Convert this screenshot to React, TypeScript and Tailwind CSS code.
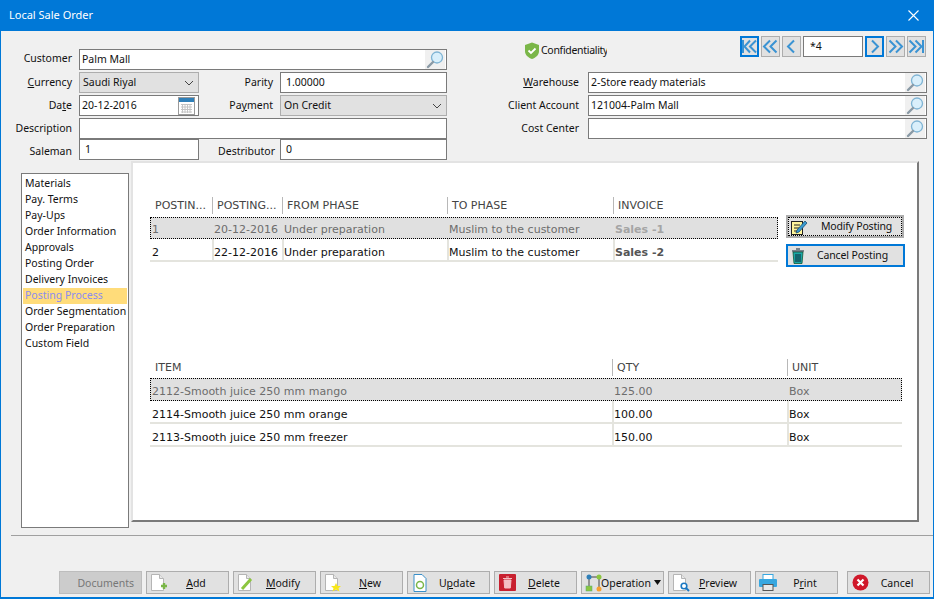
import { type ReactNode } from "react";

const BASE_FONT = "font-['Noto_Sans',sans-serif] text-[10.5px]";

function Lens() {
  return (
    <svg width="20" height="19" viewBox="0 0 20 19" className="shrink-0">
      <rect width="20" height="19" fill="#f0f0f0" />
      <circle cx="12" cy="7.5" r="5.5" fill="#d9effb" stroke="#7fb4d4" strokeWidth="1.3" />
      <path d="M8 12 L3 17" stroke="#8a9aa6" strokeWidth="2.4" strokeLinecap="round" />
    </svg>
  );
}

function Calendar() {
  return (
    <svg width="17" height="18" viewBox="0 0 17 18" className="shrink-0 mr-[2px]">
      <rect x="0.5" y="0.5" width="16" height="17" fill="#fff" stroke="#9a9a9a" />
      <rect x="1" y="1" width="15" height="4" fill="#2f7fb8" />
      <path d="M3 7.5h11M3 10h11M3 12.5h11M3 15h11M4.5 7v9M7 7v9M9.5 7v9M12 7v9" stroke="#c4c4c4" />
    </svg>
  );
}

function Chevron() {
  return (
    <svg width="10" height="6" viewBox="0 0 10 6" className="shrink-0">
      <path d="M1 1l4 4 4-4" fill="none" stroke="#444" strokeWidth="1" />
    </svg>
  );
}

function Label({ children, className = "" }: { children: ReactNode; className?: string }) {
  return <span className={`text-right text-[#111] shrink-0 ${className}`}>{children}</span>;
}

function Field({ children, className = "", icon }: { children?: ReactNode; className?: string; icon?: ReactNode }) {
  return (
    <div className={`h-[21px] shrink-0 bg-white border border-[#7a7a7a] flex items-center justify-between pl-[2px] pr-px text-[#111] ${className}`}>
      <span>{children}</span>
      {icon}
    </div>
  );
}

function Select({ children, className = "" }: { children: ReactNode; className?: string }) {
  return (
    <div className={`h-[21px] shrink-0 bg-[#e1e1e1] border border-[#adadad] flex items-center justify-between pl-[3px] pr-[4px] text-[#111] ${className}`}>
      <span>{children}</span>
      <Chevron />
    </div>
  );
}

type NavKind = "first" | "prevPage" | "prev" | "next" | "nextPage" | "last";

function NavButton({ kind, focused = false }: { kind: NavKind; focused?: boolean }) {
  const paths: Record<NavKind, string> = {
    first: "M10 3.5L4.500 9.500l5.500 6M16 3.500l-6 6 6 6",
    prevPage: "M9 3.500L3 9.500l6 6M15.500 3.500l-6 6 6 6",
    prev: "M12 3.500L6 9.500l6 6",
    next: "M7 3.500l6 6-6 6",
    nextPage: "M3.500 3.500l6 6-6 6M10 3.500l6 6-6 6",
    last: "M2.500 3.500l6 6-6 6M8.500 3.500l6 6-6 6",
  };
  return (
    <div className={`w-[19px] h-[21px] shrink-0 bg-[#e1e1e1] flex items-center justify-center ${focused ? "border-2 border-[#0078d7]" : "border border-[#adadad]"}`}>
      <svg width="19" height="19" viewBox="0 0 19 19" className="shrink-0">
        <path d={paths[kind]} fill="none" stroke="#3a93d3" strokeWidth="2" />
        {kind === "first" && <path d="M3 3v13" stroke="#3a93d3" strokeWidth="2" />}
        {kind === "last" && <path d="M16 3v13" stroke="#3a93d3" strokeWidth="2" />}
      </svg>
    </div>
  );
}

function ActionButton({ label, hotkey, icon }: { label: string; hotkey?: number; icon: ReactNode }) {
  const i = hotkey ?? -1;
  return (
    <div className="w-[83px] h-[23px] shrink-0 bg-[#e1e1e1] border border-[#adadad] flex items-center pl-[3px] pr-[4px] text-[#111]">
      <span className="w-[18px] h-[18px] shrink-0 flex items-center justify-center">{icon}</span>
      <span className="flex-1 text-center whitespace-nowrap pt-[2px]">
        {i >= 0 ? (
          <>
            {label.slice(0, i)}
            <u>{label[i]}</u>
            {label.slice(i + 1)}
          </>
        ) : (
          label
        )}
      </span>
    </div>
  );
}

function Sheet({ badge }: { badge: ReactNode }) {
  return (
    <svg width="18" height="18" viewBox="0 0 18 18">
      <path d="M1.5 0.5h8l4 4v12h-12z" fill="#fff" stroke="#b5b5b5" />
      <path d="M9.5 0.5v4h4" fill="#e8e8e8" stroke="#b5b5b5" />
      {badge}
    </svg>
  );
}

const nav = ["Materials", "Pay. Terms", "Pay-Ups", "Order Information", "Approvals", "Posting Order", "Delivery Invoices", "Posting Process", "Order Segmentation", "Order Preparation", "Custom Field"];

const postingCols = ["w-[62px]", "w-[70px]", "w-[165px]", "w-[166px]", "w-[165px]"];
const itemCols = ["w-[462px]", "w-[175px]", "w-[115px]"];

function Header({ cells, widths }: { cells: string[]; widths: string[] }) {
  return (
    <div className="flex items-center h-[17px] text-[#444] font-['DejaVu_Sans',sans-serif] text-[11px]">
      {cells.map((c, i) => (
        <div key={c + i} className={`${widths[i]} h-full flex items-center pt-[2px] whitespace-nowrap ${i > 0 ? "border-l border-[#b8b8b8] pl-[4px]" : "pl-[5px]"}`}>
          {c}
        </div>
      ))}
    </div>
  );
}

function Row({ cells, widths, selected = false, boldLast = false, className = "" }: { cells: string[]; widths: string[]; selected?: boolean; boldLast?: boolean; className?: string }) {
  return (
    <div className={`flex font-['DejaVu_Sans',sans-serif] text-[11px] ${selected ? "leading-[16px] bg-[#e0e0e0] text-[#6d6d6d] outline-1 -outline-offset-1 outline-dotted outline-black pb-px" : "leading-[14px] h-[23px] bg-white text-[#111] border-b-2 border-[#e4e4de]"} ${className}`}>
      {cells.map((c, i) => (
        <div key={c + i} className={`${widths[i]} h-full flex items-end whitespace-nowrap ${i > 0 ? `border-l-2 ${selected ? "border-transparent" : "border-[#e4e4de]"}` : "pl-[2px]"} ${boldLast && i === cells.length - 1 ? `font-bold ${selected ? "text-[#a5a5a5]" : "text-[#555]"}` : ""}`}>
          {c}
        </div>
      ))}
    </div>
  );
}

export default function App() {
  return (
    <div className={`w-[934px] h-[599px] flex flex-col bg-[#f0f0f0] border-x border-b-2 border-[#0078d7] ${BASE_FONT}`}>
      <div className="h-[31px] shrink-0 -mx-px bg-[#0078d7] text-white flex items-center justify-between pl-[9px] pr-[15px] text-[11px]">
        <span>Local Sale Order</span>
        <svg width="11" height="11" viewBox="0 0 11 11">
          <path d="M0.5 0.5l10 10M10.5 0.5l-10 10" stroke="#fff" strokeWidth="1.1" />
        </svg>
      </div>

      <div className="h-[130px] shrink-0 flex">
        <div className="w-[448px] shrink-0 pt-[18px] flex flex-col">
          <div className="flex items-center gap-[7px]">
            <Label className="w-[71px] pb-[2px]">Customer</Label>
            <Field className="w-[368px]" icon={<Lens />}>Palm Mall</Field>
          </div>
          <div className="flex items-center gap-[7px] mt-[2px]">
            <Label className="w-[71px]"><u>C</u>urrency</Label>
            <Select className="w-[120px]">Saudi Riyal</Select>
            <Label className="w-[67px]">Parity</Label>
            <Field className="w-[167px] pl-[5px]">1.00000</Field>
          </div>
          <div className="flex items-center gap-[7px] mt-[2px]">
            <Label className="w-[71px]">Da<u>t</u>e</Label>
            <Field className="w-[120px]" icon={<Calendar />}>20-12-2016</Field>
            <Label className="w-[67px]">Pa<u>y</u>ment</Label>
            <Select className="w-[167px]">On Credit</Select>
          </div>
          <div className="flex items-center gap-[7px] mt-[2px]">
            <Label className="w-[71px]">Description</Label>
            <Field className="w-[368px]" />
          </div>
          <div className="flex items-center gap-[7px]">
            <Label className="w-[71px] pt-[4px]">Saleman</Label>
            <Field className="w-[120px] pl-[5px]">1</Field>
            <Label className="w-[69px] -mr-[2px] pt-[4px]">Destributor</Label>
            <Field className="w-[167px] pl-[5px]">0</Field>
          </div>
        </div>

        <div className="flex-1 flex flex-col">
          <div className="h-[41px] flex items-start pl-[75px]">
            <div className="flex items-center gap-px mt-[11px] w-[216px]">
              <svg width="16" height="17" viewBox="0 0 16 17" className="shrink-0">
                <path d="M8 0.5L15 3v6c0 4-3 6.500-7 8-4-1.500-7-4-7-8V3z" fill="#7ab648" />
                <path d="M4.500 8.500l2.500 2.500 4.500-4.500" fill="none" stroke="#fff" strokeWidth="1.800" />
              </svg>
              <span className="w-[66px] overflow-hidden whitespace-nowrap text-[#111] tracking-[-0.3px]">Confidentiality</span>
            </div>
            <div className="flex gap-[2px] mt-[5px]">
              <NavButton kind="first" focused />
              <NavButton kind="prevPage" />
              <NavButton kind="prev" />
              <Field className="w-[60px]"><span className="pl-[4px]">*4</span></Field>
              <NavButton kind="next" focused />
              <NavButton kind="nextPage" />
              <NavButton kind="last" />
            </div>
          </div>
          <div className="flex flex-col gap-[2px]">
            {[
              ["Warehouse", "2-Store ready materials"],
              ["Client Account", "121004-Palm Mall"],
              ["Cost Center", ""],
            ].map(([label, value], i) => (
              <div key={label} className="flex items-center gap-[9px]">
                <Label className="w-[130px]">
                  {i === 0 ? <><u>W</u>arehouse</> : label}
                </Label>
                <Field className="w-[339px]" icon={<Lens />}>{value}</Field>
              </div>
            ))}
          </div>
        </div>
      </div>

      <div className="h-[361px] shrink-0 flex">
        <div className="ml-[20px] mt-[12px] w-[108px] h-[355px] bg-white border border-[#7a7a7a] px-px pt-[2px] text-[#111]">
          {nav.map((item) => (
            <div key={item} className={`h-[16px] pl-[2px] flex items-center whitespace-nowrap ${item === "Posting Process" ? "bg-[#ffdc7a] text-[#8c8cf0]" : ""}`}>
              {item}
            </div>
          ))}
        </div>
        <div className="ml-[2px] w-[788px] h-[361px] bg-white border-2 border-t-[#e3e3e3] border-l-[#e3e3e3] border-r-[#7a7a7a] border-b-[#7a7a7a] pl-[17px] pt-[34px]">
          <div className="flex">
            <div className="w-[628px]">
              <Header cells={["POSTIN...", "POSTING...", "FROM PHASE", "TO PHASE", "INVOICE"]} widths={postingCols} />
              <Row cells={["1", "20-12-2016", "Under preparation", "Muslim to the customer", "Sales -1"]} widths={postingCols} selected boldLast className="mt-[3px] h-[22px]" />
              <Row cells={["2", "22-12-2016", "Under preparation", "Muslim to the customer", "Sales -2"]} widths={postingCols} boldLast />
            </div>
            <div className="ml-[8px] mt-[18px] flex flex-col gap-[6px] text-[#111]">
              <div className="w-[118px] h-[23px] bg-[#e1e1e1] border-2 border-[#adadad] flex items-center pl-[2px] outline-1 -outline-offset-3 outline-dotted outline-black">
                <svg width="18" height="18" viewBox="0 0 18 18" className="shrink-0">
                  <rect x="1.500" y="3.500" width="11" height="13" fill="#fff59a" stroke="#222" />
                  <path d="M4 7h6M4 10h6M4 13h4" stroke="#222" />
                  <path d="M7 12L15 3l2 2-8 9-3 1z" fill="#3a9bd1" stroke="#1b4f72" strokeWidth="0.8" />
                </svg>
                <span className="flex-1 text-center pl-[3px] tracking-[-0.2px] whitespace-nowrap">Modify Posting</span>
              </div>
              <div className="w-[119px] h-[23px] bg-[#e1e1e1] border-2 border-[#0078d7] flex items-center pl-[3px]">
                <svg width="14" height="16" viewBox="0 0 14 16" className="shrink-0">
                  <path d="M2 4h10l-1 11.500H3z" fill="#1aa7a7" stroke="#153" strokeWidth="0.8" />
                  <path d="M1 3h12M5 1h4M5 6v8M7 6v8M9 6v8" stroke="#123" strokeWidth="1" />
                </svg>
                <span className="flex-1 text-center pr-[3px] tracking-[-0.1px] whitespace-nowrap">Cancel Posting</span>
              </div>
            </div>
          </div>
          <div className="w-[752px] mt-[92px]">
            <Header cells={["ITEM", "QTY", "UNIT"]} widths={itemCols} />
            <Row cells={["2112-Smooth juice 250 mm mango", "125.00", "Box"]} widths={itemCols} selected className="mt-[2px] h-[23px]" />
            <Row cells={["2114-Smooth juice 250 mm orange", "100.00", "Box"]} widths={itemCols} />
            <Row cells={["2113-Smooth juice 250 mm freezer", "150.00", "Box"]} widths={itemCols} />
          </div>
        </div>
      </div>

      <div className="ml-[10px] mt-[13px] border-t border-[#a0a0a0] flex-1 min-h-0 flex items-start pt-[35px] pl-[48px] gap-[4px]">
        <div className="w-[83px] h-[23px] shrink-0 bg-[#cccccc] border border-[#bdbdbd] text-[#777] flex items-center justify-end pr-[7px] pt-[2px]">Documents</div>
        <ActionButton label="Add" hotkey={0} icon={<Sheet badge={<path d="M11 12h6M14 9v6" stroke="#7ab648" strokeWidth="2.400" />} />} />
        <ActionButton label="Modify" hotkey={0} icon={<Sheet badge={<path d="M5 15l9-10" stroke="#8cc63f" strokeWidth="3" />} />} />
        <ActionButton label="New" hotkey={0} icon={<Sheet badge={<path d="M12 9l1.500 3H17l-2.500 2.200 1 3.300-3.500-2-3.500 2 1-3.300L7 12h3.500z" fill="#f8e71c" />} />} />
        <ActionButton label="Update" hotkey={1} icon={
          <svg width="14" height="18" viewBox="0 0 14 18">
            <path d="M1 0.500h8l4 4v13H1z" fill="#fff" stroke="#3a8fc8" />
            <circle cx="7" cy="11" r="3.500" fill="none" stroke="#7ab648" strokeWidth="1.500" />
          </svg>
        } />
        <ActionButton label="Delete" hotkey={0} icon={
          <svg width="17" height="17" viewBox="0 0 17 17">
            <rect width="17" height="17" rx="1" fill="#c8202f" />
            <path d="M5 6h7l-.7 8H5.700zM4 4.500h9M7 3h3" fill="#f4c0c4" stroke="#f4c0c4" />
          </svg>
        } />
        <div className="w-[83px] h-[23px] shrink-0 bg-[#e1e1e1] border border-[#adadad] flex items-center pl-[3px] text-[#111]">
          <svg width="18" height="18" viewBox="0 0 18 18" className="shrink-0">
            <path d="M4 3h10M4 3v10M14 3v10" stroke="#444" />
            <circle cx="4" cy="3" r="2.500" fill="#2f7fb8" />
            <circle cx="14" cy="3" r="2.500" fill="#8cc63f" />
            <rect x="1" y="12" width="6" height="5" fill="#8cc63f" stroke="#5a7" strokeWidth="0.500" />
            <circle cx="14" cy="15" r="2.500" fill="#f7a030" />
          </svg>
          <span className="flex-1 whitespace-nowrap pt-[2px] -ml-[2px]">Operation</span>
          <svg width="7" height="5" viewBox="0 0 7 5" className="mr-[2px] shrink-0">
            <path d="M0 0h7L3.500 5z" fill="#111" />
          </svg>
        </div>
        <ActionButton label="Preview" hotkey={0} icon={<Sheet badge={<><circle cx="12" cy="12" r="2.800" fill="#fff" stroke="#1a78c2" strokeWidth="1.600" /><path d="M14 14l3 3" stroke="#1a78c2" strokeWidth="2" /></>} />} />
        <ActionButton label="Print" hotkey={1} icon={
          <svg width="18" height="17" viewBox="0 0 18 17">
            <rect x="4" y="0.500" width="10" height="5" fill="#fff" stroke="#37a7e0" />
            <rect x="0" y="5" width="18" height="8" rx="1" fill="#37a7e0" />
            <rect x="4" y="10.500" width="10" height="6" fill="#e8e8e8" stroke="#555" />
          </svg>
        } />
        <div className="ml-[5px]">
          <ActionButton label="Cancel" icon={
            <svg width="17" height="17" viewBox="0 0 17 17">
              <circle cx="8.500" cy="8.500" r="8" fill="#d0182a" />
              <path d="M5.500 5.500l6 6M11.500 5.500l-6 6" stroke="#fff" strokeWidth="2.200" />
            </svg>
          } />
        </div>
      </div>
    </div>
  );
}
